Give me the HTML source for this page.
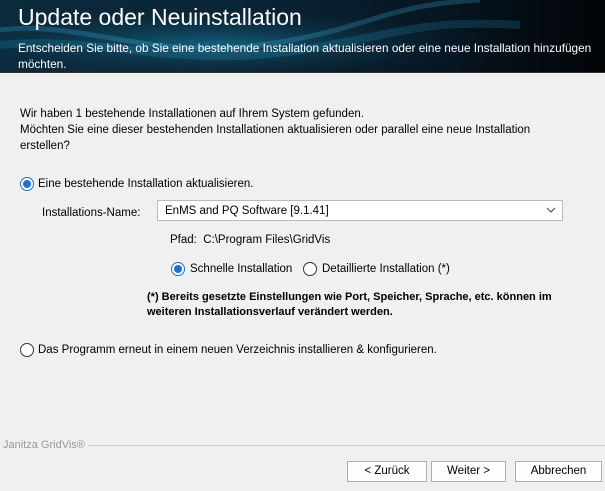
<!DOCTYPE html>
<html><head><meta charset="utf-8"><style>
*{margin:0;padding:0;box-sizing:border-box}
body{width:605px;height:491px;background:#f0f0f0;font-family:"Liberation Sans",sans-serif;font-size:11.5px;color:#000;position:relative;overflow:hidden}
.hdr{position:absolute;left:0;top:0;width:605px;height:73px;background:linear-gradient(90deg,#0b2a3c 0%,#0a2536 40%,#061420 75%,#020406 100%);overflow:hidden;border-bottom:1px solid #333}
.t{position:absolute;white-space:nowrap}
.r{position:absolute;width:14px;height:14px;border-radius:50%;border:1px solid #333;background:#fff}
.r.on{border-color:#1a73d1}
.r.on::after{content:"";position:absolute;left:2px;top:2px;width:8px;height:8px;border-radius:50%;background:#1a73d1}
.btn{position:absolute;top:461px;height:21px;border:1px solid #adadad;background:#fdfdfd;text-align:center;line-height:19px;font-size:11.5px}
</style></head><body>
<div class="hdr">
<svg width="605" height="73" style="position:absolute;left:0;top:0">
<defs><radialGradient id="g" cx="0.35" cy="0.6" r="0.5"><stop offset="0" stop-color="#1b8bb5" stop-opacity="0.55"/><stop offset="1" stop-color="#0a2536" stop-opacity="0"/></radialGradient></defs>
<rect width="605" height="73" fill="url(#g)"/>
<path d="M0 30 C80 20 150 60 260 45 S380 5 480 0" stroke="#3fb7e0" stroke-opacity="0.25" stroke-width="5" fill="none"/>
<path d="M0 45 C100 35 180 70 300 50 S420 20 520 25" stroke="#2aa0cf" stroke-opacity="0.2" stroke-width="8" fill="none"/>
</svg>
<div class="t" style="left:18px;top:4px;font-size:23px;color:#fff">Update oder Neuinstallation</div>
<div class="t" style="left:18px;top:40px;font-size:11.8px;color:#fff;line-height:16px">Entscheiden Sie bitte, ob Sie eine bestehende Installation aktualisieren oder eine neue Installation hinzufügen<br>möchten.</div>
</div>
<div class="t" style="left:20px;top:106px;line-height:16px">Wir haben 1 bestehende Installationen auf Ihrem System gefunden.<br>Möchten Sie eine dieser bestehenden Installationen aktualisieren oder parallel eine neue Installation<br>erstellen?</div>
<div class="r on" style="left:20px;top:177px"></div>
<div class="t" style="left:38px;top:178px">Eine bestehende Installation aktualisieren.</div>
<div class="t" style="left:42px;top:207px">Installations-Name:</div>
<div style="position:absolute;left:157px;top:200px;width:406px;height:21px;background:#fff;border:1px solid #bbb"></div>
<div class="t" style="left:165px;top:205px">EnMS and PQ Software [9.1.41]</div>
<svg style="position:absolute;left:546px;top:206px" width="10" height="8"><path d="M1 2 L5 6 L9 2" stroke="#444" fill="none"/></svg>
<div class="t" style="left:170px;top:234px">Pfad:&nbsp; C:\Program Files\GridVis</div>
<div class="r on" style="left:171px;top:262px"></div>
<div class="t" style="left:190px;top:263px">Schnelle Installation</div>
<div class="r" style="left:303px;top:262px"></div>
<div class="t" style="left:322px;top:263px">Detaillierte Installation (*)</div>
<div class="t" style="left:147px;top:290px;font-weight:bold;font-size:11px;line-height:15px">(*) Bereits gesetzte Einstellungen wie Port, Speicher, Sprache, etc. können im<br>weiteren Installationsverlauf verändert werden.</div>
<div class="r" style="left:20px;top:343px"></div>
<div class="t" style="left:38px;top:344px">Das Programm erneut in einem neuen Verzeichnis installieren &amp; konfigurieren.</div>
<div class="t" style="left:3px;top:439px;color:#999;font-size:11px">Janitza GridVis®</div>
<div style="position:absolute;left:88px;top:445px;width:517px;height:1px;background:#ccc"></div>
<div class="btn" style="left:347px;width:80px">&lt; Zurück</div>
<div class="btn" style="left:431px;width:75px">Weiter &gt;</div>
<div class="btn" style="left:515px;width:87px">Abbrechen</div>
</body></html>
